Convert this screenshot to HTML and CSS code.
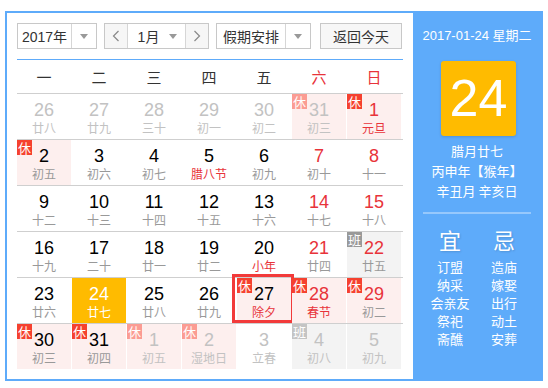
FILE: index.html
```html
<!doctype html>
<html lang="zh-CN">
  <head>
    <meta charset="UTF-8" />
    <meta name="viewport" content="width=device-width, initial-scale=1.0" />
    <title>万年历</title>
    <link rel="stylesheet" href="styles.css">
  </head>
  <body>
    <div class="calendar">
      <div class="main">
        <div class="toolbar">
          <div class="select year">
            <span class="select-text">2017年</span>
            <span class="select-arrow"><i class="caret"></i></span>
          </div>
          <div class="month-group">
            <span class="nav prev">
              <svg width="8" height="12" viewBox="0 0 8 12"><polyline points="6.5,1 1.5,6 6.5,11" fill="none" stroke="#888" stroke-width="1.2"/></svg>
            </span>
            <span class="month">
              <span class="select-text">1月</span>
              <i class="caret"></i>
            </span>
            <span class="nav next">
              <svg width="8" height="12" viewBox="0 0 8 12"><polyline points="1.5,1 6.5,6 1.5,11" fill="none" stroke="#888" stroke-width="1.2"/></svg>
            </span>
          </div>
          <div class="select holiday">
            <span class="select-text">假期安排</span>
            <span class="select-arrow"><i class="caret"></i></span>
          </div>
          <div class="today-btn">返回今天</div>
        </div>

        <div class="weekdays">
          <span>一</span><span>二</span><span>三</span><span>四</span><span>五</span>
          <span class="red">六</span><span class="red">日</span>
        </div>

        <div class="days">
          <div class="week">
            <div class="day other"><b>26</b><small>廿八</small></div>
            <div class="day other"><b>27</b><small>廿九</small></div>
            <div class="day other"><b>28</b><small>三十</small></div>
            <div class="day other"><b>29</b><small>初一</small></div>
            <div class="day other"><b>30</b><small>初二</small></div>
            <div class="day other rest"><span class="tag">休</span><b>31</b><small>初三</small></div>
            <div class="day rest weekend"><span class="tag">休</span><b>1</b><small class="fest">元旦</small></div>
          </div>
          <div class="week">
            <div class="day rest"><span class="tag">休</span><b>2</b><small>初五</small></div>
            <div class="day"><b>3</b><small>初六</small></div>
            <div class="day"><b>4</b><small>初七</small></div>
            <div class="day"><b>5</b><small class="fest">腊八节</small></div>
            <div class="day"><b>6</b><small>初九</small></div>
            <div class="day weekend"><b>7</b><small>初十</small></div>
            <div class="day weekend"><b>8</b><small>十一</small></div>
          </div>
          <div class="week">
            <div class="day"><b>9</b><small>十二</small></div>
            <div class="day"><b>10</b><small>十三</small></div>
            <div class="day"><b>11</b><small>十四</small></div>
            <div class="day"><b>12</b><small>十五</small></div>
            <div class="day"><b>13</b><small>十六</small></div>
            <div class="day weekend"><b>14</b><small>十七</small></div>
            <div class="day weekend"><b>15</b><small>十八</small></div>
          </div>
          <div class="week">
            <div class="day"><b>16</b><small>十九</small></div>
            <div class="day"><b>17</b><small>二十</small></div>
            <div class="day"><b>18</b><small>廿一</small></div>
            <div class="day"><b>19</b><small>廿二</small></div>
            <div class="day"><b>20</b><small class="fest">小年</small></div>
            <div class="day weekend"><b>21</b><small>廿四</small></div>
            <div class="day work weekend"><span class="tag tag-work">班</span><b>22</b><small>廿五</small></div>
          </div>
          <div class="week">
            <div class="day"><b>23</b><small>廿六</small></div>
            <div class="day today"><b>24</b><small>廿七</small></div>
            <div class="day"><b>25</b><small>廿八</small></div>
            <div class="day"><b>26</b><small>廿九</small></div>
            <div class="day rest selected"><span class="tag">休</span><b>27</b><small class="fest">除夕</small></div>
            <div class="day rest weekend"><span class="tag">休</span><b>28</b><small class="fest">春节</small></div>
            <div class="day rest weekend"><span class="tag">休</span><b>29</b><small>初二</small></div>
          </div>
          <div class="week">
            <div class="day rest"><span class="tag">休</span><b>30</b><small>初三</small></div>
            <div class="day rest"><span class="tag">休</span><b>31</b><small>初四</small></div>
            <div class="day other rest"><span class="tag">休</span><b>1</b><small>初五</small></div>
            <div class="day other rest"><span class="tag">休</span><b>2</b><small>湿地日</small></div>
            <div class="day other"><b>3</b><small>立春</small></div>
            <div class="day other work"><span class="tag tag-work">班</span><b>4</b><small>初八</small></div>
            <div class="day other work"><b>5</b><small>初九</small></div>
          </div>
        </div>
      </div>

      <div class="side">
        <div class="side-date">2017-01-24 星期二</div>
        <div class="side-day">24</div>
        <div class="side-lunar">
          <p>腊月廿七</p>
          <p>丙申年【猴年】</p>
          <p>辛丑月 辛亥日</p>
        </div>
        <div class="side-line"></div>
        <div class="advice">
          <div class="advice-col">
            <h3>宜</h3>
            <p>订盟</p>
            <p>纳采</p>
            <p>会亲友</p>
            <p>祭祀</p>
            <p>斋醮</p>
          </div>
          <div class="advice-col">
            <h3>忌</h3>
            <p>造庙</p>
            <p>嫁娶</p>
            <p>出行</p>
            <p>动土</p>
            <p>安葬</p>
          </div>
        </div>
      </div>
    </div>
  </body>
</html>
```

FILE: styles.css
```css
:root {
  --blue: #5eabfa;
  --red: #e8333a;
  --line: #cfcfcf;
}

body {
  margin: 0;
  background: #fff;
  font-family: "Liberation Sans", Arial, "Noto Sans CJK SC", sans-serif;
  color: #000;
}

.calendar {
  display: flex;
  width: 534px;
  height: 366px;
  margin: 11px 0 0 5px;
  border: 2px solid var(--blue);
}

.main {
  width: 386px;
  padding: 10px 10px 0 10px;
}

/* toolbar */
.toolbar {
  display: flex;
  height: 26px;
  padding-bottom: 10px;
  border-bottom: 1px solid var(--blue);
  font-size: 14px;
  color: #333;
}

.select,
.month-group,
.today-btn {
  display: flex;
  box-sizing: border-box;
  height: 26px;
  border: 1px solid #c8c8c8;
  background: #fff;
}

.select-text {
  flex: 1;
  display: flex;
  align-items: center;
  justify-content: center;
}

.select-arrow {
  width: 24px;
  display: flex;
  align-items: center;
  justify-content: center;
  border-left: 1px solid #d6d6d6;
}

.caret {
  width: 0;
  height: 0;
  border-left: 4px solid transparent;
  border-right: 4px solid transparent;
  border-top: 5px solid #999;
}

.year {
  width: 80px;
}

.month-group {
  width: 105px;
  margin-left: 7px;
}

.nav {
  width: 22px;
  display: flex;
  align-items: center;
  justify-content: center;
  background: #f6f6f6;
}

.prev {
  border-right: 1px solid #d6d6d6;
}

.next {
  border-left: 1px solid #d6d6d6;
}

.month {
  flex: 1;
  display: flex;
  align-items: center;
  padding-right: 8px;
}

.holiday {
  width: 95px;
  margin-left: 7px;
}

.today-btn {
  width: 82px;
  margin-left: 9px;
  align-items: center;
  justify-content: center;
  background: #f7f7f7;
}

/* grid */
.weekdays {
  display: flex;
  gap: 1px;
  height: 33px;
  border-bottom: 1px solid var(--line);
  font-family: "Noto Sans CJK SC", sans-serif;
  font-size: 15px;
  color: #333;
}

.weekdays span {
  width: 54px;
  display: flex;
  align-items: center;
  justify-content: center;
}

.weekdays .red {
  color: var(--red);
}

.week {
  display: flex;
  gap: 1px;
  height: 45px;
  border-bottom: 1px solid var(--line);
}

.week:last-child {
  border-bottom: none;
}

.day {
  position: relative;
  width: 54px;
  display: flex;
  flex-direction: column;
  align-items: center;
  padding-top: 6px;
  box-sizing: border-box;
}

.day b {
  font-weight: normal;
  font-size: 18px;
  line-height: 20px;
}

.day small {
  font-family: "Noto Sans CJK SC", sans-serif;
  font-size: 12px;
  line-height: 16px;
  color: #999;
}

.day.weekend b {
  color: var(--red);
}

.day small.fest {
  color: var(--red);
}

.day.rest {
  background: #fdefee;
}

.day.work {
  background: #f3f3f3;
}

.day.other b,
.day.other small {
  color: #c2c2c2;
}

.day.today {
  background: #ffbb00;
}

.day.today b,
.day.today small {
  color: #fff;
}

.tag {
  position: absolute;
  top: 0;
  left: 0;
  width: 15px;
  height: 15px;
  background: #f5412f;
  color: #fff;
  font-family: "Noto Sans CJK SC", sans-serif;
  font-size: 13px;
  line-height: 15px;
  text-align: center;
}

.tag-work {
  background: #999;
}

.other .tag {
  background: #fb9c93;
}

.other .tag-work {
  background: #c4c4c4;
}

.selected::after {
  content: "";
  position: absolute;
  top: -4px;
  left: -5px;
  right: -3px;
  bottom: 0;
  border: 3px solid #f23a3a;
}

/* side panel */
.side {
  width: 108px;
  margin: -2px 0 -1px 0;
  padding: 2px 10px 0 10px;
  background: var(--blue);
  color: #fff;
  display: flex;
  flex-direction: column;
  align-items: center;
  font-family: "Noto Sans CJK SC", sans-serif;
}

.side-date {
  margin-top: 13px;
  font-family: "Liberation Sans", Arial, "Noto Sans CJK SC", sans-serif;
  font-size: 13px;
  line-height: 20px;
  white-space: nowrap;
}

.side-day {
  width: 75px;
  height: 75px;
  margin-top: 15px;
  margin-left: 3px;
  border-radius: 3px;
  background: #ffbb00;
  box-shadow: 0 1px 3px rgba(0, 0, 0, 0.15);
  font-family: "Liberation Sans", Arial, sans-serif;
  font-size: 52px;
  line-height: 75px;
  text-align: center;
}

.side-lunar {
  margin-top: 5px;
  font-size: 13px;
  line-height: 20px;
  text-align: center;
  white-space: nowrap;
}

.side-lunar p {
  margin: 0;
}

.side-line {
  align-self: stretch;
  height: 2px;
  margin-top: 11px;
  background: rgba(255, 255, 255, 0.35);
}

.advice {
  align-self: stretch;
  display: flex;
  margin-top: 10px;
}

.advice-col {
  flex: 1;
  text-align: center;
}

.advice-col h3 {
  margin: 0 0 4px 0;
  font-size: 22px;
  font-weight: normal;
  line-height: 30px;
  text-shadow: 1px 1px 2px rgba(0, 0, 0, 0.15);
}

.advice-col p {
  margin: 0;
  font-size: 13px;
  line-height: 18px;
}
```
